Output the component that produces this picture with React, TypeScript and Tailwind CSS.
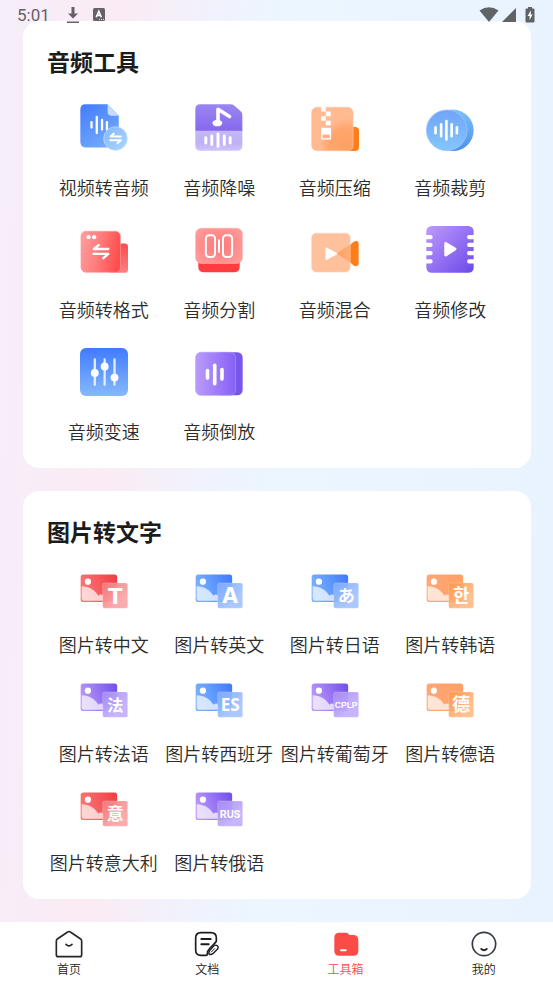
import React from 'react';

interface ITool {
  label: string;
  icon: React.ReactNode;
}

interface IPictureIcon {
  id: string;
  text: string;
  size: number;
  theme: 'red' | 'blue' | 'purple' | 'orange';
  font?: string;
}

const THEMES = {
  red: { from: '#fa7474', to: '#f03c42', cardFrom: '#f67a7a', cardTo: '#fba5a8' },
  blue: { from: '#78b0fd', to: '#3f79fd', cardFrom: '#7fabfc', cardTo: '#a6c4ff' },
  purple: { from: '#b795fa', to: '#6f4dea', cardFrom: '#a88df2', cardTo: '#c2b0fa' },
  orange: { from: '#ffa775', to: '#ff9f68', cardFrom: '#ff9548', cardTo: '#ffbc8c' },
};

// Vertical rounded bars of a wave form: [x, top, bottom]
function Bars({ bars, width = 8 }: { bars: number[][]; width?: number }) {
  return (
    <g stroke="#fff" strokeWidth={width} strokeLinecap="round">
      {bars.map(([x, top, bottom]) => (
        <line key={x} x1={x} x2={x} y1={top + width / 2} y2={bottom - width / 2} />
      ))}
    </g>
  );
}

function Icon({ children }: { children: React.ReactNode }) {
  return (
    <svg viewBox="0 0 146 146" className="size-12" aria-hidden="true">
      {children}
    </svg>
  );
}

function PictureIcon({ id, text, size, theme, font = 'Noto Sans' }: IPictureIcon) {
  const t = THEMES[theme];
  return (
    <svg viewBox="0 0 146 106" className="h-[35px] w-12" aria-hidden="true">
      <defs>
        <linearGradient id={`${id}-a`} x1="0" x2="1" y1="0.3" y2="0">
          <stop offset="0" stopColor={t.from} />
          <stop offset="1" stopColor={t.to} />
        </linearGradient>
        <linearGradient id={`${id}-b`} x1="0" x2="0.7" y1="0" y2="0.7">
          <stop offset="0" stopColor={t.cardFrom} />
          <stop offset="1" stopColor={t.cardTo} />
        </linearGradient>
      </defs>
      <rect x="2" y="1" width="111" height="84" rx="8" fill={`url(#${id}-a)`} />
      <circle cx="24" cy="23" r="9.5" fill="#fff" />
      <path d="M5 37C28 37 46 49 56 66C61 60 67 61 72 66V81H12Q5 81 5 74Z" fill="#fff" fillOpacity="0.7" />
      <rect x="69" y="27" width="76" height="77" rx="5" fill={`url(#${id}-b)`} fillOpacity="0.94" stroke="#fff" strokeOpacity="0.3" strokeWidth="2" />
      <text
        x="107"
        y={67 + size * 0.36}
        textAnchor="middle"
        fontSize={size}
        fontWeight="700"
        fill="#fff"
        fontFamily={`'${font}', 'Noto Sans CJK SC', 'Noto Sans CJK KR', sans-serif`}
      >
        {text}
      </text>
    </svg>
  );
}

function VideoToAudioIcon() {
  return (
    <Icon>
      <defs>
        <linearGradient id="va-a" x1="0" y1="0" x2="0.6" y2="1">
          <stop offset="0" stopColor="#427cfd" />
          <stop offset="1" stopColor="#72a9fb" />
        </linearGradient>
        <linearGradient id="va-b" x1="0" y1="0" x2="1" y2="1">
          <stop offset="0" stopColor="#83b6fa" />
          <stop offset="1" stopColor="#acd7ff" />
        </linearGradient>
      </defs>
      <path d="M17 1H84L118 36V115Q118 132 101 132H17Q1 132 1 115V17Q1 1 17 1Z" fill="url(#va-a)" />
      <path d="M84 1L118 36H96Q84 36 84 23Z" fill="#c5dcfd" />
      <Bars bars={[[35, 52, 75], [51, 36, 92], [67, 45, 81], [82, 52, 81]]} width={7} />
      <circle cx="108" cy="105" r="36" fill="url(#va-b)" stroke="#c8e3ff" strokeWidth="2" />
      <path d="M124 99H93L103 90M92 110H124L114 119" fill="none" stroke="#fff" strokeWidth="6" strokeLinecap="round" strokeLinejoin="round" />
    </Icon>
  );
}

function DenoiseIcon() {
  return (
    <Icon>
      <defs>
        <linearGradient id="dn-a" x1="0" y1="0" x2="0" y2="1">
          <stop offset="0" stopColor="#9b86f3" />
          <stop offset="1" stopColor="#8468ec" />
        </linearGradient>
        <linearGradient id="dn-b" x1="0" y1="0" x2="0" y2="1">
          <stop offset="0" stopColor="#c5b8f8" />
          <stop offset="0.6" stopColor="#beb0f4" />
          <stop offset="1" stopColor="#cfc4fa" />
        </linearGradient>
      </defs>
      <path d="M16 1H108Q115 1 120 5L139 22Q144 26 144 32V84H1V16Q1 1 16 1Z" fill="url(#dn-a)" />
      <path d="M1 81H144V126Q144 142 128 142H17Q1 142 1 126Z" fill="url(#dn-b)" />
      <ellipse cx="68" cy="58" rx="15" ry="10" fill="#fff" />
      <path d="M70 56V16L105 38" fill="none" stroke="#fff" strokeWidth="11" strokeLinecap="round" strokeLinejoin="round" />
      <Bars bars={[[33, 98, 123], [51, 93, 128], [70, 87, 134], [89, 93, 128], [107, 98, 123]]} width={9} />
    </Icon>
  );
}

function CompressIcon() {
  return (
    <Icon>
      <defs>
        <radialGradient id="cp-a" cx="0.85" cy="0.9" r="0.65">
          <stop offset="0" stopColor="#ffa061" />
          <stop offset="0.65" stopColor="#ffa66e" />
          <stop offset="1" stopColor="#ffba92" />
        </radialGradient>
      </defs>
      <rect x="90" y="70" width="56" height="73" rx="12" fill="#ff7e1a" />
      <rect x="2" y="10" width="126" height="132" rx="16" fill="url(#cp-a)" stroke="#ffc7a5" strokeWidth="2" />
      <path d="M31 9H45V23H31ZM45 23H60V37H45ZM31 37H45V51H31ZM45 51H60V65H45ZM31 72H61V108H31Z" fill="#fff" />
      <rect x="35" y="93" width="22" height="11" fill="#ffb080" />
    </Icon>
  );
}

function CropIcon() {
  return (
    <Icon>
      <defs>
        <linearGradient id="cr-a" x1="0" y1="0" x2="0" y2="1">
          <stop offset="0" stopColor="#70a4f9" />
          <stop offset="1" stopColor="#83c6fc" />
        </linearGradient>
        <linearGradient id="cr-b" x1="0" y1="0" x2="0" y2="1">
          <stop offset="0" stopColor="#7cc0fb" />
          <stop offset="1" stopColor="#4f8eed" />
        </linearGradient>
      </defs>
      <circle cx="82" cy="80" r="63" fill="url(#cr-b)" />
      <circle cx="63" cy="80" r="62" fill="url(#cr-a)" stroke="#9dcafc" strokeWidth="2" />
      <Bars bars={[[29, 67, 93], [46, 58, 102], [62, 48, 112], [78, 58, 102], [94, 67, 93]]} />
    </Icon>
  );
}

function FormatIcon() {
  return (
    <Icon>
      <defs>
        <linearGradient id="fm-a" x1="0" y1="0.3" x2="1" y2="0.5">
          <stop offset="0" stopColor="#ff9a9a" />
          <stop offset="0.4" stopColor="#ff8181" />
          <stop offset="1" stopColor="#ff4b4b" />
        </linearGradient>
        <linearGradient id="fm-b" x1="0" y1="0" x2="0" y2="1">
          <stop offset="0" stopColor="#f94c50" />
          <stop offset="1" stopColor="#fb8080" />
        </linearGradient>
      </defs>
      <rect x="84" y="53" width="62" height="89" rx="10" fill="url(#fm-b)" />
      <rect x="3" y="16" width="120" height="125" rx="15" fill="url(#fm-a)" stroke="#ff9c9c" strokeWidth="2" />
      <circle cx="26" cy="34" r="6.5" fill="#fff" />
      <circle cx="43" cy="34" r="6.5" fill="#fff" />
      <path d="M86 70H42L57 58M41 85H86L71 98" fill="none" stroke="#fff" strokeWidth="7" strokeLinecap="round" strokeLinejoin="round" />
    </Icon>
  );
}

function SplitIcon() {
  return (
    <Icon>
      <defs>
        <radialGradient id="sp-a" cx="0.5" cy="0.5" r="0.6">
          <stop offset="0" stopColor="#ff7676" />
          <stop offset="1" stopColor="#ff9a9a" />
        </radialGradient>
      </defs>
      <path d="M10 90H136V124Q136 141 118 141H28Q10 141 10 124Z" fill="#ff3d3f" />
      <rect x="2" y="7" width="142" height="107" rx="17" fill="url(#sp-a)" stroke="#ffabab" strokeWidth="2" />
      <g fill="none" stroke="#fff" strokeWidth="6">
        <rect x="33" y="28" width="28" height="66" rx="10" />
        <rect x="85" y="28" width="28" height="66" rx="10" />
        <path d="M73 43V79" strokeLinecap="round" />
      </g>
    </Icon>
  );
}

function MixIcon() {
  return (
    <Icon>
      <defs>
        <linearGradient id="mx-a" x1="0" y1="0" x2="1" y2="0">
          <stop offset="0" stopColor="#ffa059" />
          <stop offset="1" stopColor="#ffae7c" />
        </linearGradient>
      </defs>
      <path d="M112 63L130 48Q134 45 139 46Q145 47 145 54V114Q145 120 139 122Q134 123 130 120L112 106Z" fill="#ff7e1c" />
      <rect x="2" y="22" width="117" height="118" rx="14" fill="#ffc19c" stroke="#ffd0b2" strokeWidth="2" />
      <path d="M78 84L118 57V111Z" fill="url(#mx-a)" />
      <path d="M46 67L78 84L46 102Z" fill="#fff" stroke="#fff" strokeWidth="4" strokeLinejoin="round" />
    </Icon>
  );
}

function ModifyIcon() {
  return (
    <Icon>
      <defs>
        <linearGradient id="md-a" x1="0" y1="0" x2="1" y2="1">
          <stop offset="0" stopColor="#be9afc" />
          <stop offset="1" stopColor="#6b4ae9" />
        </linearGradient>
      </defs>
      <rect x="1" y="0" width="144" height="142" rx="16" fill="url(#md-a)" />
      {[33, 57, 82, 107].map((y) => (
        <g key={y} fill="#fff">
          <rect x="-8" y={y - 6} width="28" height="13" rx="6" />
          <rect x="125" y={y - 6} width="28" height="13" rx="6" />
        </g>
      ))}
      <path d="M60 53L88 70L60 88Z" fill="#fff" stroke="#fff" strokeWidth="9" strokeLinejoin="round" />
    </Icon>
  );
}

function SpeedIcon() {
  return (
    <Icon>
      <defs>
        <linearGradient id="sd-a" x1="0" y1="0" x2="0" y2="1">
          <stop offset="0" stopColor="#407bff" />
          <stop offset="1" stopColor="#86b9fc" />
        </linearGradient>
      </defs>
      <rect x="0" y="0" width="146" height="146" rx="18" fill="url(#sd-a)" />
      <path d="M45 35V112M75 35V112M105 35V112" stroke="#e3eeff" strokeWidth="7" strokeLinecap="round" />
      <g fill="#fff">
        <circle cx="45" cy="76" r="12" />
        <circle cx="75" cy="56" r="12" />
        <circle cx="105" cy="90" r="12" />
      </g>
    </Icon>
  );
}

function ReverseIcon() {
  return (
    <Icon>
      <defs>
        <linearGradient id="rv-a" x1="0" y1="0" x2="1" y2="0">
          <stop offset="0" stopColor="#ba9bfb" />
          <stop offset="1" stopColor="#8661f6" />
        </linearGradient>
      </defs>
      <rect x="60" y="13" width="85" height="131" rx="16" fill="#7855eb" />
      <rect x="2" y="13" width="121" height="131" rx="16" fill="url(#rv-a)" stroke="#b199fa" strokeWidth="2" />
      <Bars bars={[[38, 63, 97], [60, 47, 114], [82, 60, 100]]} width={11} />
    </Icon>
  );
}

const audioTools: ITool[] = [
  { label: '视频转音频', icon: <VideoToAudioIcon /> },
  { label: '音频降噪', icon: <DenoiseIcon /> },
  { label: '音频压缩', icon: <CompressIcon /> },
  { label: '音频裁剪', icon: <CropIcon /> },
  { label: '音频转格式', icon: <FormatIcon /> },
  { label: '音频分割', icon: <SplitIcon /> },
  { label: '音频混合', icon: <MixIcon /> },
  { label: '音频修改', icon: <ModifyIcon /> },
  { label: '音频变速', icon: <SpeedIcon /> },
  { label: '音频倒放', icon: <ReverseIcon /> },
];

const pictureTools: ITool[] = [
  { label: '图片转中文', icon: <PictureIcon id="zh" text="T" size={64} theme="red" font="DejaVu Sans" /> },
  { label: '图片转英文', icon: <PictureIcon id="en" text="A" size={62} theme="blue" font="DejaVu Sans" /> },
  { label: '图片转日语', icon: <PictureIcon id="ja" text="あ" size={52} theme="blue" /> },
  { label: '图片转韩语', icon: <PictureIcon id="ko" text="한" size={54} theme="orange" /> },
  { label: '图片转法语', icon: <PictureIcon id="fr" text="法" size={50} theme="purple" /> },
  { label: '图片转西班牙', icon: <PictureIcon id="es" text="ES" size={52} theme="blue" /> },
  { label: '图片转葡萄牙', icon: <PictureIcon id="pt" text="CPLP" size={26} theme="purple" font="Liberation Sans" /> },
  { label: '图片转德语', icon: <PictureIcon id="de" text="德" size={54} theme="orange" /> },
  { label: '图片转意大利', icon: <PictureIcon id="it" text="意" size={52} theme="red" /> },
  { label: '图片转俄语', icon: <PictureIcon id="ru" text="RUS" size={33} theme="purple" font="Roboto" /> },
];

const tabs = [
  {
    label: '首页',
    icon: (
      <g fill="none" stroke="#26262a" strokeWidth="5" strokeLinecap="round" strokeLinejoin="round">
        <path d="M38 6Q42 3 46 6L77 27Q80 29 80 33V74Q80 80 74 80H10Q4 80 4 74V33Q4 29 7 27Z" />
        <path d="M33 43Q42 52 51 43" />
      </g>
    ),
  },
  {
    label: '文档',
    icon: (
      <g fill="none" stroke="#1c1c20" strokeWidth="5" strokeLinecap="round" strokeLinejoin="round">
        <path d="M70 34V24Q70 8 54 8H24Q8 8 8 24V60Q8 76 24 76H38Q43 76 43 71Q43 62 51 54L60 45Q64 41 70 34Z" />
        <path d="M25 27H53M25 43H47" strokeWidth="6" />
        <path d="M50 62L62 48Q68 43 73 47Q78 52 73 58L62 69Q57 74 49 74Q46 68 50 62Z" strokeWidth="4" />
        <path d="M55 66L65 56" strokeWidth="3" />
      </g>
    ),
  },
  {
    label: '工具箱',
    icon: (
      <>
        <path d="M22 8H42Q48 8 52 14Q53 15 56 15H66Q79 16 79 30V62Q79 77 64 77H22Q7 77 7 62V23Q7 8 22 8Z" fill="#fb4b46" />
        <path d="M27 61H41" stroke="#fff" strokeWidth="6" strokeLinecap="round" />
      </>
    ),
  },
  {
    label: '我的',
    icon: (
      <g fill="none" strokeLinecap="round">
        <circle cx="42" cy="42" r="35" stroke="#343b46" strokeWidth="5" />
        <path d="M34 57Q42 64 50 57" stroke="#222" strokeWidth="6" />
      </g>
    ),
  },
];

function StatusBar() {
  return (
    <header className="absolute inset-x-0 top-0 flex h-[30px] items-center pr-[18px] pl-[17px] text-[#666068]">
      <span className="pt-0.5 font-[Roboto] text-[17px]">5:01</span>
      <svg viewBox="0 0 14 18" className="ml-4 h-[18px] w-3.5" fill="currentColor" aria-hidden="true">
        <path d="M5.5 1H8.5V7.5H12L7 12.5L2 7.5H5.5ZM1 15.5H13V17H1Z" />
      </svg>
      <svg viewBox="0 0 14 14" className="ml-3 size-3.5" aria-hidden="true">
        <rect x="1" y="0" width="12" height="13" rx="1.5" fill="currentColor" />
        <path d="M4.2 9.2L6.8 3.2L9.4 9.2M5.2 7.4H8.4" fill="none" stroke="#fff" strokeWidth="1.6" />
        <path d="M7 11.4H12" stroke="#fff" strokeWidth="0.9" strokeDasharray="1 1" />
      </svg>
      <div className="ml-auto flex items-center text-[#5f6368]">
        <svg viewBox="0 0 20 16" className="h-4 w-5" fill="currentColor" aria-hidden="true">
          <path d="M10 15L0.5 3.5Q10 -3 19.5 3.5Z" />
        </svg>
        <svg viewBox="0 0 14 14" className="ml-[3px] size-3.5" fill="currentColor" aria-hidden="true">
          <path d="M14 0V14H0Z" />
        </svg>
        <svg viewBox="0 0 10 16" className="ml-[9px] h-4 w-2.5" aria-hidden="true">
          <path d="M3 0H7V1.5H8.5Q9.5 1.5 9.5 2.5V14.5Q9.5 15.5 8.5 15.5H1.5Q0.5 15.5 0.5 14.5V2.5Q0.5 1.5 1.5 1.5H3Z" fill="currentColor" />
          <path d="M5.8 3.5L2.6 9H4.6V13L7.6 7.5H5.8Z" fill="#fff" />
        </svg>
      </div>
    </header>
  );
}

function ToolCard({ title, tools }: { title: string; tools: ITool[] }) {
  return (
    <section className="rounded-2xl bg-white px-[23px] pt-[23px] pb-[23px]">
      <h2 className="pl-px text-[23px] leading-[34px] font-bold text-[#1c1c1c]">{title}</h2>
      <div className="mt-[26px] grid grid-cols-4 gap-y-[25px]">
        {tools.map((tool) => (
          <button key={tool.label} type="button" className="flex flex-col items-center gap-[21px]">
            {tool.icon}
            <span className="text-[18px] leading-7 font-[350] whitespace-nowrap text-[#2c2c2c]">{tool.label}</span>
          </button>
        ))}
      </div>
    </section>
  );
}

function App() {
  const activeTab = '工具箱';

  return (
    <div className="relative flex min-h-screen flex-col bg-[linear-gradient(92deg,#f6eefa_0%,#fbebf4_20%,#f1f2fc_36%,#ebf6ff_50%,#e8f3ff_100%)] font-['Noto_Sans_CJK_SC',sans-serif]">
      <main className="flex flex-1 flex-col gap-[23px] pt-[21px] pr-[22px] pb-[23px] pl-[23px]">
        <ToolCard title="音频工具" tools={audioTools} />
        <ToolCard title="图片转文字" tools={pictureTools} />
      </main>
      <nav className="grid grid-cols-4 bg-white pt-2 pb-[7px]">
        {tabs.map((tab) => (
          <a
            key={tab.label}
            href="#"
            className={`flex flex-col items-center gap-[3px] text-xs leading-4 font-[350] ${
              tab.label === activeTab ? 'text-[#fb4b46]' : 'text-[#222]'
            }`}
          >
            <svg viewBox="0 0 84 84" className="size-7" aria-hidden="true">
              {tab.icon}
            </svg>
            {tab.label}
          </a>
        ))}
      </nav>
      <StatusBar />
    </div>
  );
}

export default App;
